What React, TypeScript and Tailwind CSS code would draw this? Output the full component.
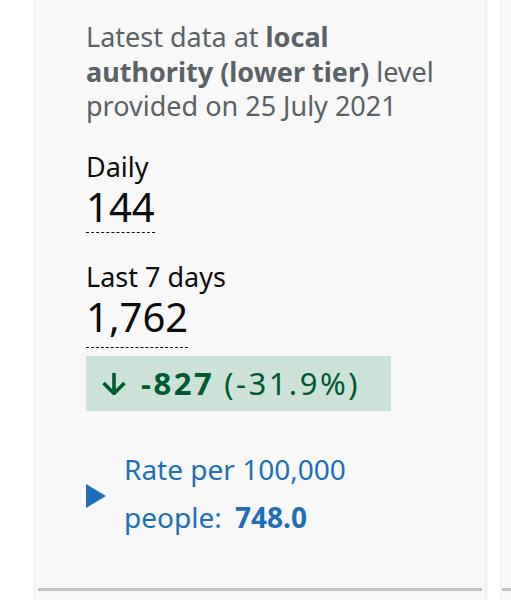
import React from "react";

const font = { fontFamily: '"Noto Sans", "Open Sans", Arial, sans-serif' };

const Metric: React.FC<{ label: string; value: string; gap: string; className?: string }> = ({ label, value, gap, className }) => (
  <div className={`flex flex-col items-start ${className ?? ""}`}>
    <span className="text-[27px] leading-[34px] text-[#0b0c0c]">{label}</span>
    <span className={`text-[40px] leading-[46px] text-[#0b0c0c] border-b border-dashed border-[#0b0c0c] ${gap}`}>
      {value}
    </span>
  </div>
);

export default function App() {
  return (
    <div className="w-[511px] h-[600px] overflow-hidden bg-white flex" style={font}>
      <div className="w-[34px] shrink-0" />
      <div className="w-[452px] shrink-0 h-full bg-[#f8f8f8] border-x border-[#ececec] shadow-[1px_0_3px_rgba(0,0,0,0.08)] flex flex-col">
        <div className="pl-[51px] pr-4 flex-1 flex flex-col">
          <h2 className="text-[24px] font-bold leading-[30px] text-[#0b0c0c] -mt-[30px]">Day testing</h2>
          <p className="mt-[20px] text-[27px] leading-[34.5px] text-[#5b6265]">
            Latest data at <b className="font-bold">local</b>
            <br />
            <b className="font-bold">authority (lower tier)</b> level
            <br />
            provided on 25 July 2021
          </p>
          <Metric label="Daily" value="144" gap="pb-[2px]" className="mt-[26px]" />
          <Metric label="Last 7 days" value="1,762" gap="pb-[7px]" className="mt-[27px]" />
          <div className="mt-[8.5px] w-[305px] h-[55px] bg-[#cce2d8] text-[#005a30] flex items-center pl-[16px] text-[31px] leading-none">
            <svg viewBox="0 0 24 22" width="24" height="22" className="shrink-0 w-[24px] h-[22px] mr-[15px]" aria-hidden>
              <path d="M12 0v20M1.5 10l10.5 10.5 10.5-10.5" fill="none" stroke="#005a30" strokeWidth="3.6" />
            </svg>
            <span className="font-bold tracking-[2.5px]">-827</span>
            <span className="ml-[10px] tracking-[2.5px]">(-31.9%)</span>
          </div>
          <div className="mt-[33.5px] flex items-start text-[#1d70b8]">
            <span className="shrink-0 w-0 h-0 border-y-[12px] border-y-transparent border-l-[20px] border-l-[#1d70b8] mr-[18px] mt-[39.5px]" />
            <span className="text-[28px] leading-[48px]">
              Rate per 100,000
              <br />
              people: <b className="font-bold ml-[6px]">748.0</b>
            </span>
          </div>
        </div>
        <div className="mx-[3px] h-[3px] bg-[#bfc1c3] mb-[9px]" />
      </div>
      <div className="w-[14px] shrink-0" />
      <div className="flex-1 h-full bg-[#f8f8f8] border-l border-[#ececec] flex flex-col justify-end">
        <div className="h-[3px] bg-[#bfc1c3] mb-[9px] ml-[1px]" />
      </div>
    </div>
  );
}
